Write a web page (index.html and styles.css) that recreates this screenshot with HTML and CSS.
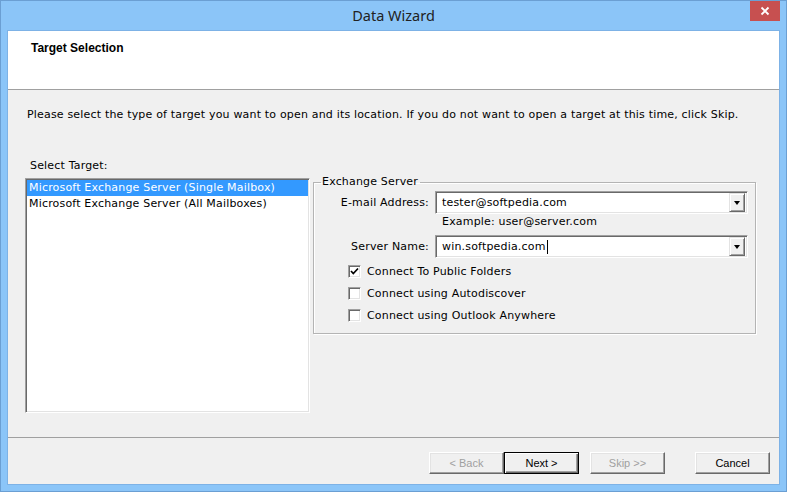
FILE: index.html
```html
<!DOCTYPE html>
<html>
<head>
<meta charset="utf-8">
<title>Data Wizard</title>
<link rel="stylesheet" href="styles.css">
</head>
<body>
<div class="window">
  <div class="titlebar">
    <div></div>
    <div class="title">Data Wizard</div>
    <div class="close">
      <svg width="10" height="10" viewBox="0 0 10 10"><path d="M1.5 1.5 L8.5 8.5 M8.5 1.5 L1.5 8.5" stroke="#fff" stroke-width="1.8" fill="none"/></svg>
    </div>
  </div>
  <div class="client">
    <div class="header">
      <div class="header-title">Target Selection</div>
    </div>
    <div class="content">
      <div class="intro">Please select the type of target you want to open and its location. If you do not want to open a target at this time, click Skip.</div>
      <div class="main">
        <div class="left">
          <div class="select-label">Select Target:</div>
          <div class="listbox">
            <div class="item selected">Microsoft Exchange Server (Single Mailbox)</div>
            <div class="item">Microsoft Exchange Server (All Mailboxes)</div>
          </div>
        </div>
        <div class="right">
          <fieldset class="group">
            <legend>Exchange Server</legend>
            <div class="row first">
              <div class="label">E-mail Address:</div>
              <div class="combo">
                <div class="combo-text">tester@softpedia.com</div>
                <div class="drop"><span class="tri"></span></div>
              </div>
            </div>
            <div class="example">Example: user@server.com</div>
            <div class="row second">
              <div class="label">Server Name:</div>
              <div class="combo">
                <div class="combo-text">win.softpedia.com<span class="caret"></span></div>
                <div class="drop"><span class="tri"></span></div>
              </div>
            </div>
            <div class="checks">
              <div class="check-row r1">
                <span class="box"><svg width="11" height="11" viewBox="0 0 11 11"><path d="M2 5 L4.3 7.5 L9 2.5" stroke="#000" stroke-width="1.7" fill="none"/></svg></span>
                <span>Connect To Public Folders</span>
              </div>
              <div class="check-row r2">
                <span class="box"></span>
                <span>Connect using Autodiscover</span>
              </div>
              <div class="check-row r3">
                <span class="box"></span>
                <span>Connect using Outlook Anywhere</span>
              </div>
            </div>
          </fieldset>
        </div>
      </div>
    </div>
    <div class="footer">
      <div class="btn disabled">&lt; Back</div>
      <div class="btn default">Next &gt;</div>
      <div class="btn disabled skip">Skip &gt;&gt;</div>
      <div class="btn cancel">Cancel</div>
    </div>
  </div>
</div>
</body>
</html>
```
FILE: styles.css
```css
html, body {
  margin: 0;
  padding: 0;
  overflow: hidden;
}
body {
  font-family: "DejaVu Sans", sans-serif;
  font-size: 11px;
  letter-spacing: 0.18px;
  color: #000;
}
.window {
  width: 787px;
  height: 492px;
  box-sizing: border-box;
  border: 1px solid #6b9fd3;
  background: #8bc5f8;
  display: flex;
  flex-direction: column;
}
.titlebar {
  height: 29px;
  display: grid;
  grid-template-columns: 1fr auto 1fr;
  align-items: center;
}
.title {
  font-family: "Noto Sans", sans-serif;
  font-size: 14.5px;
  letter-spacing: 0;
  color: #222;
  line-height: 20px;
  padding-bottom: 1px;
}
.close {
  justify-self: end;
  align-self: start;
  margin-right: 6px;
  width: 30px;
  height: 20px;
  background: #c75050;
  display: flex;
  align-items: center;
  justify-content: center;
}
.client {
  flex: 1;
  margin: 0 6px 6px 6px;
  border: 1px solid #7db2e6;
  background: #f0f0f0;
  display: flex;
  flex-direction: column;
}
.header {
  height: 58px;
  background: #fff;
  border-bottom: 1px solid #a0a0a0;
  flex: none;
}
.header-title {
  font-family: "Liberation Sans", sans-serif;
  font-weight: bold;
  font-size: 12px;
  letter-spacing: 0;
  line-height: 14px;
  padding: 10px 0 0 23px;
}
.content {
  flex: 1;
  padding: 18px 0 0 17px;
}
.intro {
  line-height: 14px;
  margin-left: 2px;
  white-space: nowrap;
}
.main {
  display: flex;
  margin-top: 37px;
}
.select-label {
  line-height: 14px;
  margin-left: 5px;
  margin-bottom: 5px;
}
.listbox {
  width: 285px;
  height: 235px;
  box-sizing: border-box;
  background: #fff;
  border: 1px solid;
  border-color: #a0a0a0 #fff #fff #a0a0a0;
  box-shadow: inset 1px 1px 0 #696969, inset -1px -1px 0 #e3e3e3;
  padding: 1px;
}
.item {
  line-height: 16px;
  padding-left: 2px;
  white-space: nowrap;
}
.item.selected {
  background: #3399ff;
  color: #fff;
}
.right {
  margin-left: 3px;
  margin-top: 16px;
}
.group {
  width: 443px;
  box-sizing: border-box;
  margin: 0;
  padding: 0 0 6px 0;
  min-width: 0;
  border: 1px solid #b4b4b4;
  box-shadow: inset 1px 1px 0 #fff, 1px 1px 0 #fff;
}
.group legend {
  padding: 0 2px 0 1px;
  margin-left: 7px;
  line-height: 14px;
}
.row {
  display: flex;
  align-items: center;
}
.row.first {
  margin-top: 2px;
}
.row.second {
  margin-top: 6px;
}
.label {
  width: 115px;
  text-align: right;
  margin-right: 6px;
  white-space: nowrap;
}
.combo {
  width: 313px;
  height: 23px;
  box-sizing: border-box;
  background: #fff;
  border: 1px solid;
  border-color: #a0a0a0 #fff #fff #a0a0a0;
  box-shadow: inset 1px 1px 0 #696969, inset -1px -1px 0 #e3e3e3;
  padding: 1px 2px 1px 1px;
  display: flex;
  align-items: stretch;
}
.combo-text {
  flex: 1;
  padding-left: 5px;
  line-height: 19px;
  display: flex;
  align-items: center;
}
.caret {
  display: inline-block;
  width: 1px;
  height: 14px;
  background: #000;
  margin-left: 1px;
}
.drop {
  width: 16px;
  box-sizing: border-box;
  background: #f0f0f0;
  border: 1px solid;
  border-color: #e3e3e3 #696969 #696969 #e3e3e3;
  box-shadow: inset 1px 1px 0 #fff, inset -1px -1px 0 #a0a0a0;
  display: flex;
  align-items: center;
  justify-content: center;
}
.tri {
  width: 0;
  height: 0;
  border-left: 3.5px solid transparent;
  border-right: 3.5px solid transparent;
  border-top: 4px solid #000;
  margin-top: 1px;
}
.example {
  margin-top: 1px;
  margin-left: 128px;
  line-height: 14px;
}
.checks {
  margin-top: 2px;
}
.check-row {
  display: flex;
  align-items: center;
  height: 22px;
  padding-left: 34px;
}
.check-row.r3 {
  height: 23px;
}
.box {
  width: 13px;
  height: 13px;
  box-sizing: border-box;
  background: #fff;
  border: 1px solid;
  border-color: #a0a0a0 #fff #fff #a0a0a0;
  box-shadow: inset 1px 1px 0 #696969, inset -1px -1px 0 #e3e3e3;
  margin-right: 6px;
  display: flex;
  align-items: center;
  justify-content: center;
}
.footer {
  flex: none;
  border-top: 1px solid #a0a0a0;
  padding: 14px 9px 10px 0;
  display: flex;
  justify-content: flex-end;
}
.btn {
  width: 75px;
  height: 22px;
  box-sizing: border-box;
  font-family: "Liberation Sans", sans-serif;
  font-size: 11px;
  letter-spacing: 0;
  display: flex;
  align-items: center;
  justify-content: center;
  background: #f0f0f0;
  border: 1px solid;
  border-color: #fff #696969 #696969 #fff;
  box-shadow: inset -1px -1px 0 #a0a0a0, inset 1px 1px 0 #e3e3e3;
}
.btn.default {
  border-color: #000;
  box-shadow: inset 1px 1px 0 #fff, inset -1px -1px 0 #696969, inset -2px -2px 0 #a0a0a0;
}
.btn.disabled {
  color: #a0a0a0;
}
.btn.skip {
  margin-left: 11px;
}
.btn.cancel {
  margin-left: 30px;
}
```
